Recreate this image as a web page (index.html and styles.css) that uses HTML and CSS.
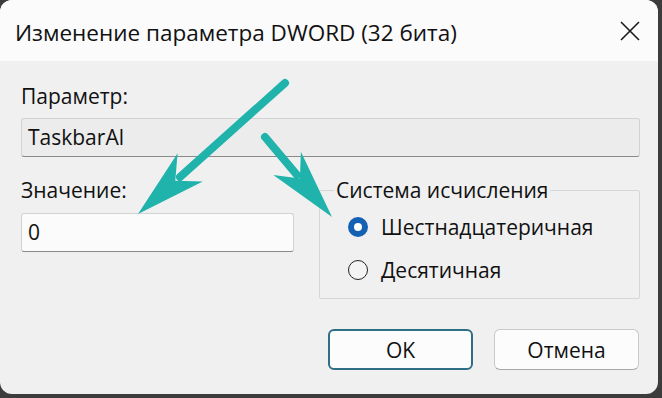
FILE: index.html
```html
<!DOCTYPE html>
<html lang="ru">
<head>
<meta charset="utf-8">
<title>Изменение параметра DWORD (32 бита)</title>
<link rel="stylesheet" href="styles.css">
</head>
<body>
<div class="window">
  <div class="titlebar">
    <span class="title">Изменение параметра DWORD (32 бита)</span>
    <span class="close" aria-label="Закрыть">
      <svg width="20" height="20" viewBox="0 0 20 20"><path d="M1 1 L19 19 M19 1 L1 19" stroke="#1a1a1a" stroke-width="1.6" fill="none"/></svg>
    </span>
  </div>
  <div class="content">
    <div class="label">Параметр:</div>
    <div class="field field-ro">TaskbarAl</div>
    <div class="row">
      <div class="col-left">
        <div class="label">Значение:</div>
        <div class="field field-edit">0</div>
      </div>
      <fieldset class="group">
        <legend class="legend">Система исчисления</legend>
        <div class="radio-row">
          <span class="radio radio-on"></span>
          <span class="radio-text">Шестнадцатеричная</span>
        </div>
        <div class="radio-row">
          <span class="radio"></span>
          <span class="radio-text">Десятичная</span>
        </div>
      </fieldset>
    </div>
    <div class="buttons">
      <div class="btn btn-default">OK</div>
      <div class="btn">Отмена</div>
    </div>
  </div>
  <svg class="arrows" width="662" height="398" viewBox="0 0 662 398">
    <g fill="#1fb3ab" stroke="#1fb3ab">
      <line x1="285" y1="83" x2="180" y2="177" stroke-width="8" stroke-linecap="round"/>
      <polygon stroke="none" points="138,214 177.6,153.2 175.3,180.7 202.8,181.6"/>
      <line x1="265" y1="137" x2="297" y2="175" stroke-width="8" stroke-linecap="round"/>
      <polygon stroke="none" points="332,217 300.9,151.7 299.9,178.6 273.3,174.9"/>
    </g>
  </svg>
</div>
</body>
</html>
```

FILE: styles.css
```css
html, body {
  margin: 0;
  padding: 0;
}
body {
  width: 662px;
  height: 398px;
  background: #3c3c3c;
  font-family: "Open Sans", "Noto Sans", sans-serif;
  color: #111;
  overflow: hidden;
}
.window {
  position: relative;
  width: 658px;
  height: 394px;
  background: #f0f0f0;
  border-radius: 12px;
  overflow: hidden;
  display: flex;
  flex-direction: column;
}
.titlebar {
  height: 61px;
  flex: none;
  background: #fbfbfb;
  display: flex;
  align-items: center;
  padding: 0 18px 0 15px;
  justify-content: space-between;
}
.title {
  font-size: 22.5px;
  color: #111;
  padding-top: 3px;
}
.close {
  display: flex;
  width: 20px;
  height: 20px;
  margin-top: 1px;
}
.content {
  padding: 22px 18px 0 21px;
  display: flex;
  flex-direction: column;
}
.label {
  font-size: 21px;
  line-height: 26px;
  height: 26px;
}
.field {
  box-sizing: border-box;
  height: 39px;
  border: 1px solid #d2d2d2;
  border-bottom: 1.5px solid #8a8a8a;
  border-radius: 3px;
  font-size: 21px;
  line-height: 36px;
  padding: 0 6px;
}
.field-ro {
  margin-top: 9px;
  background: #ececec;
}
.field-edit {
  margin-top: 10px;
  background: #fbfbfb;
}
.row {
  display: grid;
  grid-template-columns: 273px 1fr;
  column-gap: 25px;
  margin-top: 20px;
}
.group {
  margin: 0;
  height: 122px;
  box-sizing: border-box;
  border: 1px solid #d6d6d6;
  border-radius: 2px;
  padding: 11px 0 0 14px;
  display: flex;
  flex-direction: column;
  gap: 17px;
}
.legend {
  font-size: 21px;
  line-height: 26px;
  padding: 0 2px;
  margin-left: 0;
}
.radio-row {
  display: flex;
  align-items: center;
  gap: 13px;
  height: 26px;
  margin-left: 14px;
}
.radio {
  box-sizing: border-box;
  width: 20px;
  height: 20px;
  border-radius: 50%;
  border: 1.5px solid #222;
  background: #f4f4f4;
  flex: none;
}
.radio-on {
  border: 6.5px solid #1461b3;
  background: #fff;
}
.radio-text {
  font-size: 21px;
}
.buttons {
  display: flex;
  justify-content: flex-end;
  gap: 21px;
  margin-top: 30px;
  padding-right: 1px;
}
.btn {
  box-sizing: border-box;
  width: 145px;
  height: 41px;
  border: 1px solid #c9c9c9;
  border-bottom-color: #a8a8a8;
  border-radius: 6px;
  background: #fcfcfc;
  font-size: 21px;
  display: flex;
  align-items: center;
  justify-content: center;
}
.btn-default {
  border: 2px solid #2f6f86;
}
.arrows {
  position: absolute;
  left: 0;
  top: 0;
  pointer-events: none;
}
```
